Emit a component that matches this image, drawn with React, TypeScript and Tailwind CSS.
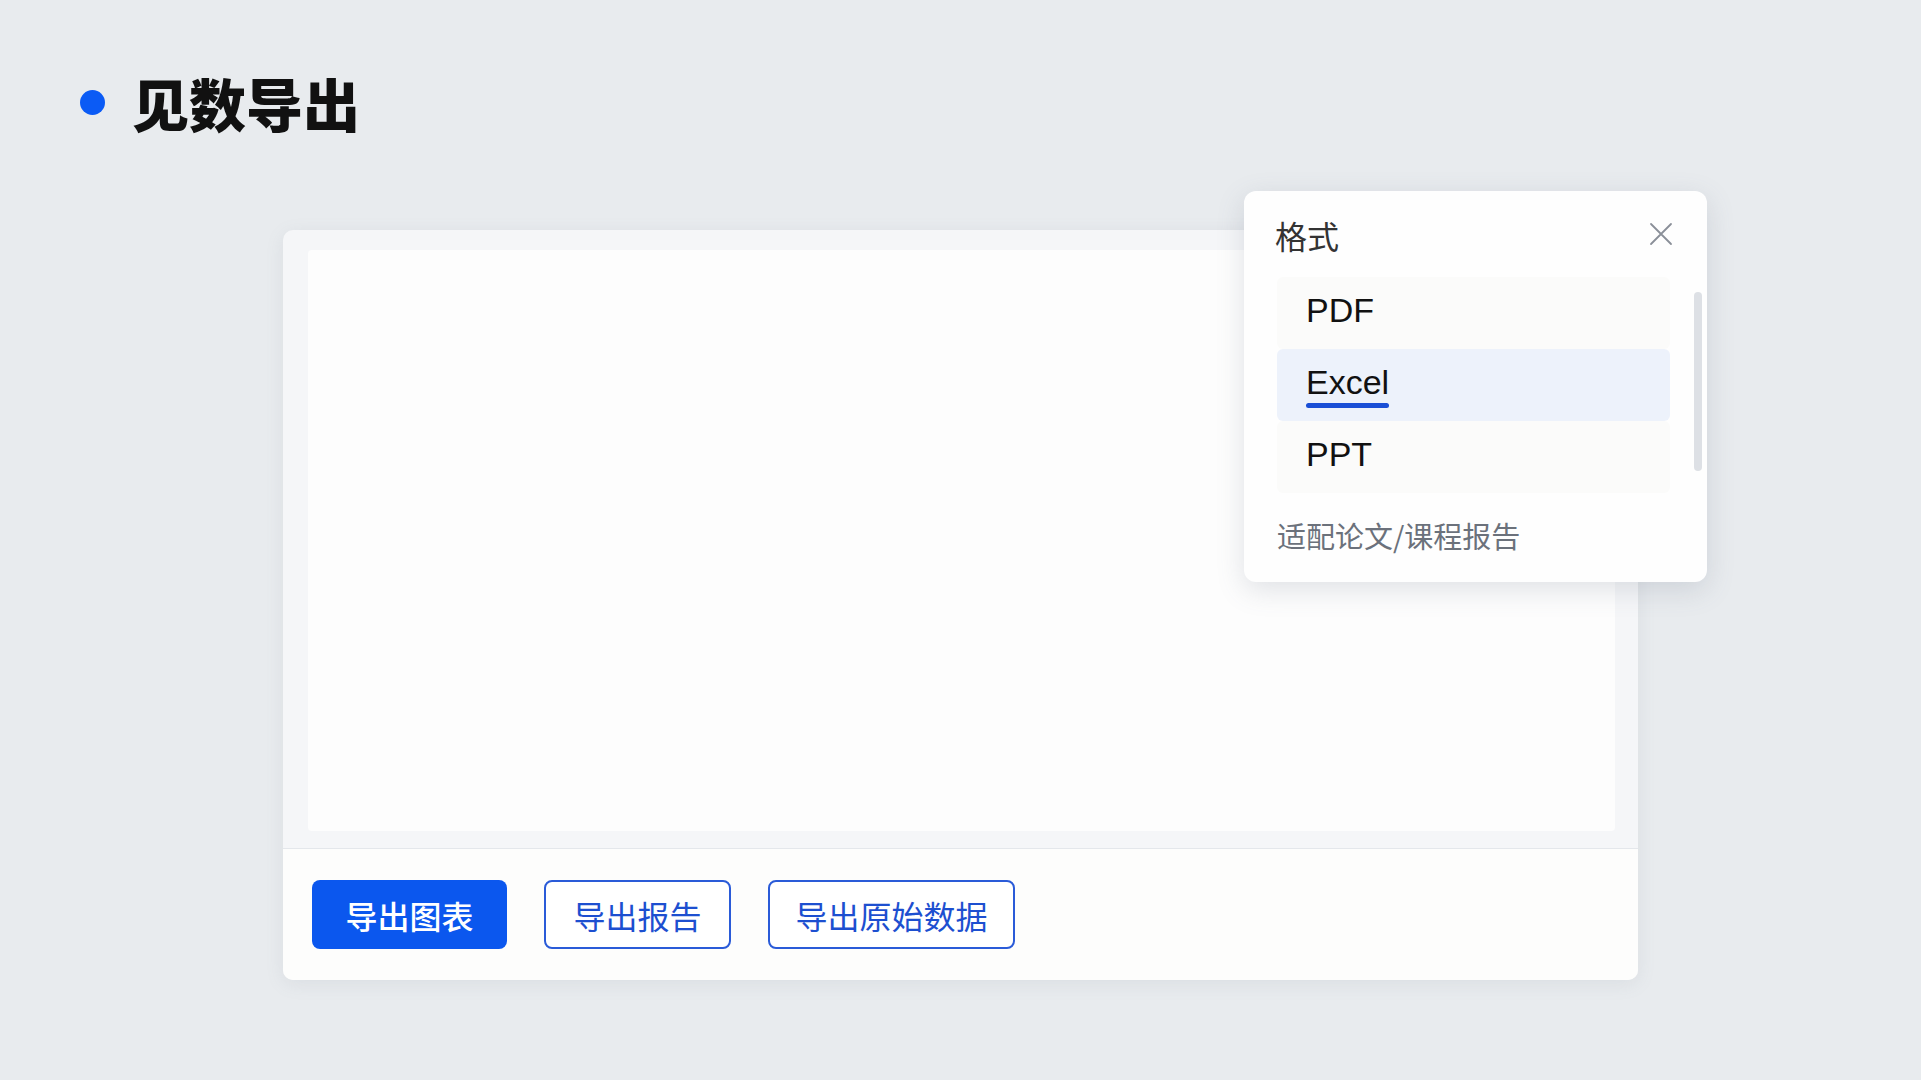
export default function App() {
  const cjk = { fontFamily: '"Noto Sans CJK SC", "Noto Sans", sans-serif' };
  const latin = { fontFamily: '"Liberation Sans", Arial, sans-serif' };

  return (
    <div className="w-[1921px] h-[1080px] overflow-hidden bg-[#e8ebee]" style={cjk}>
      <div className="flex items-center pl-[80px] pt-[74px] h-[130px]">
        <span className="w-[25px] h-[25px] rounded-full bg-[#0b5bf5]" />
        <h1 className="ml-[27px] text-[57px] leading-[56px] font-black text-[#111]">见数导出</h1>
      </div>

      <div className="relative ml-[283px] mt-[100px] w-[1355px] h-[750px] rounded-[10px] bg-[#f5f6f8] shadow-[0_4px_18px_rgba(120,130,150,0.12)] flex flex-col">
        <div className="pt-[20px] pl-[25px] pr-[23px]">
          <div className="h-[581px] rounded-[4px] bg-[#fdfdfd]" />
        </div>
        <div className="mt-[17px] flex-1 border-t border-[#e4e7eb] bg-[#fdfdfc] rounded-b-[10px] flex items-center gap-[37px] pl-[29px]">
          <button className="w-[195px] h-[69px] rounded-[8px] bg-[#0b57ee] text-white text-[32px] leading-none font-medium">
            导出图表
          </button>
          <button className="w-[187px] h-[69px] rounded-[8px] border-2 border-[#2a5bd8] bg-white text-[#1d4fd0] text-[32px] leading-none">
            导出报告
          </button>
          <button className="w-[247px] h-[69px] rounded-[8px] border-2 border-[#2a5bd8] bg-white text-[#1d4fd0] text-[32px] leading-none">
            导出原始数据
          </button>
        </div>

        <div className="absolute left-[961px] top-[-39px] w-[463px] h-[391px] rounded-[12px] bg-[#fefefe] shadow-[0_8px_28px_rgba(90,100,120,0.18)] flex">
          <div className="flex-1 flex flex-col pl-[33px]">
            <div className="h-[86px] flex items-start pt-[26px] pr-[34px] justify-between">
              <span className="ml-[-2px] text-[32px] leading-[36px] text-[#333]">格式</span>
              <svg width="24" height="24" viewBox="0 0 24 24" className="mt-[5px]">
                <path d="M2 2 L22 22 M22 2 L2 22" stroke="#8a8f98" strokeWidth="1.8" strokeLinecap="round" />
              </svg>
            </div>
            <div className="w-[393px] flex flex-col" style={latin}>
              <div className="h-[72px] rounded-[6px] bg-[#fbfbfa] pl-[29px] pb-[5px] flex items-center text-[34px] text-[#111]">
                PDF
              </div>
              <div className="h-[72px] rounded-[6px] bg-[#edf2fb] pl-[29px] flex items-center text-[34px] text-[#111]">
                <div className="inline-flex flex-col">
                  <span className="leading-[40px]">Excel</span>
                  <span className="h-[5px] mt-[1px] rounded-full bg-[#1a4fd6]" />
                </div>
              </div>
              <div className="h-[72px] rounded-[6px] bg-[#fbfbfa] pl-[29px] pb-[5px] flex items-center text-[34px] text-[#111]">
                PPT
              </div>
            </div>
            <div className="mt-[26px] text-[29px] leading-[32px] text-[#6b717b]">适配论文/课程报告</div>
          </div>
          <div className="absolute left-[450px] top-[101px] w-[8px] h-[179px] rounded-full bg-[#dde0e5]" />
        </div>
      </div>
    </div>
  );
}
